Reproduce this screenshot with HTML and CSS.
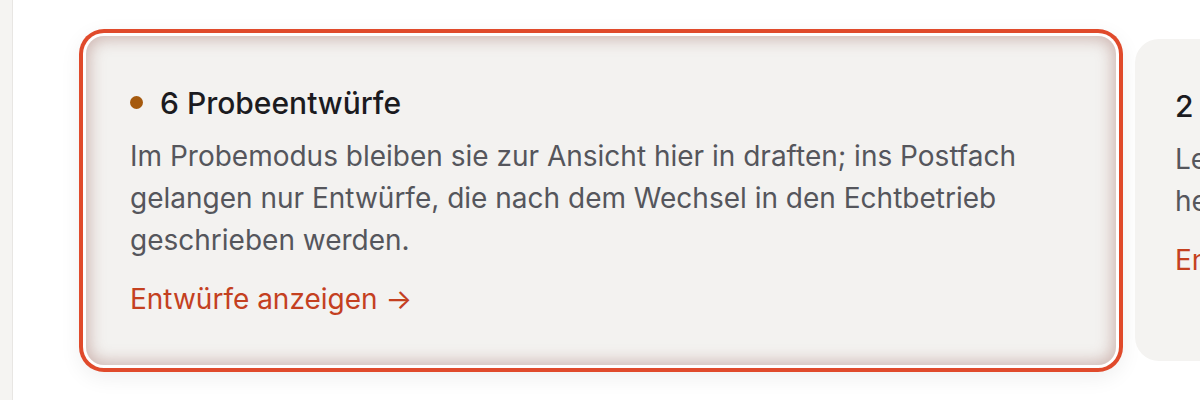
FILE: index.html
```html
<!DOCTYPE html>
<html lang="de">
<head>
<meta charset="utf-8">
<title>Probeentwürfe</title>
<link rel="stylesheet" href="styles.css">
</head>
<body>
<div class="layout">
  <aside class="sidebar"></aside>
  <main class="main">
    <div class="cards">
      <section class="card card-focused">
        <h2 class="card-title"><span class="dot"></span>6 Probeentwürfe</h2>
        <p class="card-text">Im Probemodus bleiben sie zur Ansicht hier in draften; ins Postfach gelangen nur Entwürfe, die nach dem Wechsel in den Echtbetrieb geschrieben werden.</p>
        <a class="card-link" href="#">Entwürfe anzeigen →</a>
      </section>
      <section class="card card-next">
        <h2 class="card-title">2 Leads ohne Kontakt</h2>
        <p class="card-text">Legen Sie fest, wie mit diesen Leads verfahren werden soll, damit sie heute nicht automatisch archiviert werden.</p>
        <a class="card-link" href="#">Entscheiden →</a>
      </section>
    </div>
  </main>
</div>
</body>
</html>
```
FILE: styles.css
```css
html, body {
  margin: 0;
  padding: 0;
  background: #ffffff;
  font-family: Inter, "Noto Sans", "Liberation Sans", sans-serif;
  height: 100%;
  overflow: hidden;
}

.layout {
  display: flex;
  height: 400px;
}

.sidebar {
  flex: 0 0 12px;
  background: #f5f4f2;
  border-right: 1px solid #e8e6e3;
}

.main {
  flex: 1;
  overflow: hidden;
  padding-left: 73px;
}

.cards {
  display: flex;
  align-items: center;
  gap: 19px;
  height: 400px;
  width: 3000px;
}

.card {
  flex: 0 0 auto;
  box-sizing: border-box;
  background: #f3f2f0;
  border-radius: 18px;
}

.card-focused {
  width: 1030px;
  height: 329px;
  padding: 49px 44px 0 44px;
  box-shadow:
    inset 0 0 16px 3px rgba(150, 90, 80, 0.4),
    0 0 0 3px #ffffff,
    0 0 0 7px #e04a2b,
    0 6px 22px 6px rgba(0, 0, 0, 0.07);
}

.card-next {
  width: 1030px;
  height: 322px;
  padding: 49px 40px 0 40px;
  background: #f4f3f1;
  border-radius: 24px;
}

.card-title {
  margin: 0;
  display: flex;
  align-items: center;
  gap: 17px;
  font-size: 30px;
  line-height: 36px;
  font-weight: 500;
  color: #1b1b1f;
}

.dot {
  width: 13px;
  height: 13px;
  border-radius: 50%;
  background: #a55a0e;
  flex: 0 0 auto;
}

.card-text {
  margin: 14px 0 0 0;
  font-size: 28px;
  line-height: 42px;
  color: #55565c;
  max-width: 940px;
}

.card-link {
  display: inline-block;
  margin-top: 17px;
  font-size: 28px;
  line-height: 42px;
  color: #c4401f;
  text-decoration: none;
}
```
